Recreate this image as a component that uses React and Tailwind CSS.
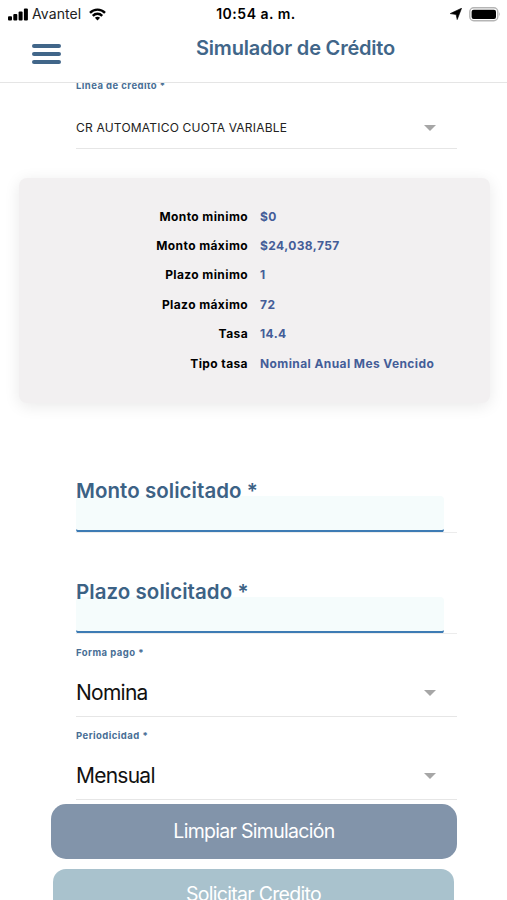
const details = [
  ['Monto minimo', '$0'],
  ['Monto máximo', '$24,038,757'],
  ['Plazo minimo', '1'],
  ['Plazo máximo', '72'],
  ['Tasa', '14.4'],
  ['Tipo tasa', 'Nominal Anual Mes Vencido'],
];

function StatusBar() {
  return (
    <div className="grid h-7 grid-cols-[1fr_auto_1fr] items-center pl-2 pr-[6px] text-black">
      <div className="flex items-center">
        <svg width="20" height="13" viewBox="0 0 20 13" className="block">
          <rect x="0" y="8.2" width="4" height="4.3" rx="1" />
          <rect x="5.3" y="6.1" width="4" height="6.4" rx="1" />
          <rect x="10.6" y="3.5" width="4" height="9" rx="1" />
          <rect x="15.9" y="0.5" width="4" height="12" rx="1" />
        </svg>
        <span className="ml-1 text-[14px] leading-7 tracking-[0.1px] text-[#222]">Avantel</span>
        <svg width="17" height="13" viewBox="0 0 17 13" className="ml-2 block" fill="none" stroke="black" strokeWidth="2.4">
          <path d="M1 4.8 C5 0.6 12 0.6 16 4.8" />
          <path d="M3.8 7.9 C6.5 5.1 10.5 5.1 13.2 7.9" />
          <path d="M8.5 12.4 L5.9 9.8 C7.4 8.5 9.6 8.5 11.1 9.8 Z" fill="black" stroke="none" />
        </svg>
      </div>
      <span className="pl-[3px] text-[14px] font-semibold leading-7 tracking-[0.5px]">10:54 a. m.</span>
      <div className="flex items-center justify-end">
        <svg width="12" height="12" viewBox="0 0 12 12" className="mr-[7px] block">
          <path d="M11.6 0.2 L7.2 11.6 L6.1 6.6 L0.2 5.6 Z" stroke="black" strokeWidth="0.6" strokeLinejoin="round" />
        </svg>
        <svg width="32" height="15" viewBox="0 0 32 15" className="block">
          <rect x="0.8" y="0.8" width="28" height="13" rx="4" fill="white" stroke="#b5b5b5" strokeWidth="1.4" />
          <rect x="2.6" y="2.7" width="24.4" height="9.2" rx="2" />
          <path d="M30.2 5 Q31.8 7.3 30.2 9.6 Z" fill="#aaa" />
        </svg>
      </div>
    </div>
  );
}

function Caret() {
  return (
    <svg width="12" height="6" viewBox="0 0 12 6" className="mr-[21px] block">
      <path d="M0 0 H12 L6 6 Z" fill="#a6a6a6" />
    </svg>
  );
}

function SmallLabel({ children }) {
  return <div className="h-4 text-[9.5px] font-bold leading-4 tracking-[0.45px] text-[#486e95]">{children}</div>;
}

function SelectField({ label, value }) {
  return (
    <div className="flex h-[83px] flex-col border-b border-[#e6e6e6] pt-[11px]">
      <SmallLabel>{label}</SmallLabel>
      <div className="flex flex-1 items-center justify-between pt-[8px]">
        <span className="text-[21px] leading-7 tracking-[-0.75px] text-[#111]">{value}</span>
        <Caret />
      </div>
    </div>
  );
}

function TextField({ label }) {
  return (
    <div className="flex h-[56px] flex-col border-b border-[#ececec]">
      <div className="-mb-[9px] h-7 text-[20.5px] font-semibold leading-7 tracking-[0.05px] text-[#3c6285]">{label}</div>
      <div className="-z-10 -mb-px mr-[13px] flex-1 rounded border-b-[3px] border-[#3d7bb4] bg-[#f5fcfc]" />
    </div>
  );
}

export default function App() {
  return (
    <div className="isolate flex h-[900px] w-[507px] flex-col overflow-hidden bg-white font-['Inter','Liberation_Sans',sans-serif]">
      <StatusBar />
      <header className="grid h-[55px] shrink-0 grid-cols-[196px_1fr] border-b border-[#e5e5e5]">
        <div className="flex flex-col gap-1 pl-8 pt-4">
          <span className="h-1 w-[29px] rounded-full bg-[#416689]" />
          <span className="h-1 w-[29px] rounded-full bg-[#416689]" />
          <span className="h-1 w-[29px] rounded-full bg-[#416689]" />
        </div>
        <h1 className="pt-[6px] text-[20px] font-semibold leading-7 tracking-[-0.2px] text-[#416689]">Simulador de Crédito</h1>
      </header>
      <main className="min-h-0 flex-1 overflow-hidden">
        <div className="-mt-[5px] ml-[76px] w-[381px] border-b border-[#e6e6e6]">
          <SmallLabel>Linea de credito *</SmallLabel>
          <div className="flex h-[54px] items-center justify-between pt-[14px]">
            <span className="text-[12px] leading-5 tracking-[0.2px] text-[#222]">CR AUTOMATICO CUOTA VARIABLE</span>
            <Caret />
          </div>
        </div>
        <section className="ml-[19px] mt-[29px] h-[225px] w-[471px] rounded-lg bg-[#f2f0f1] pt-6 shadow-[0_3px_16px_rgba(0,0,0,0.09)]">
          {details.map(([name, value]) => (
            <div key={name} className="grid h-[29.4px] grid-cols-[229px_1fr] items-center gap-3 text-[12px] font-bold tracking-[0.4px]">
              <span className="text-right text-black">{name}</span>
              <span className="text-[#445d98]">{value}</span>
            </div>
          ))}
        </section>
        <div className="ml-[76px] mt-[74px] w-[381px]">
          <TextField label="Monto solicitado *" />
          <div className="h-[45px]" />
          <TextField label="Plazo solicitado *" />
          <SelectField label="Forma pago *" value="Nomina" />
          <SelectField label="Periodicidad *" value="Mensual" />
        </div>
        <button className="ml-[51px] mt-1 block h-[55px] w-[406px] rounded-[15px] bg-[#8294aa] pt-px text-[19.5px] tracking-[-0.7px] text-white">Limpiar Simulación</button>
        <button className="ml-[53px] mt-[10px] block h-[52px] w-[401px] rounded-[13px] bg-[#a9c2cd] text-[19.5px] tracking-[-0.7px] text-white">Solicitar Credito</button>
      </main>
    </div>
  );
}
